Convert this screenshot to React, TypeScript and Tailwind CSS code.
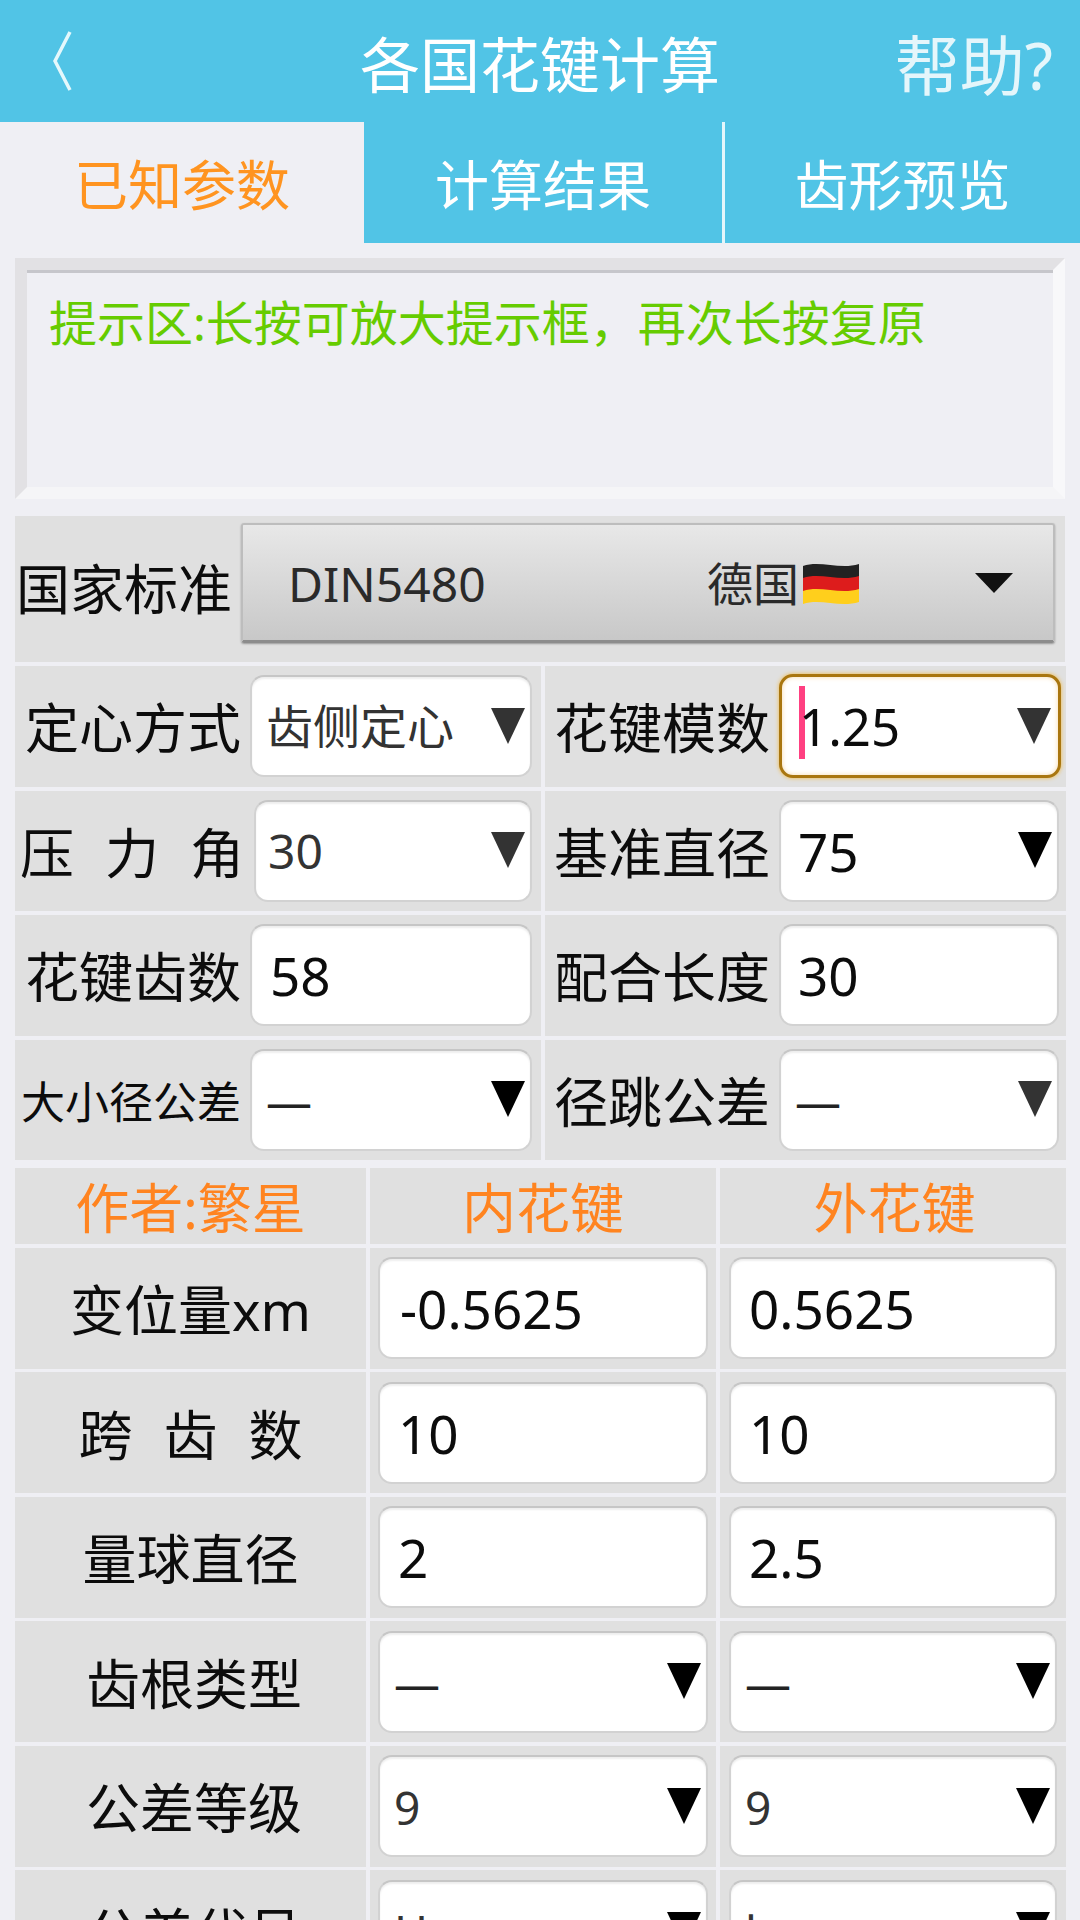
import React from "react";

function Tri({ dark }: { dark?: boolean }) {
  return (
    <svg width="34" height="36" viewBox="0 0 34 36" className="shrink-0">
      <polygon points="0,0 34,0 17,36" fill={dark ? "#333333" : "#000000"} />
    </svg>
  );
}

function Box({
  value,
  select,
  dark,
  textClass = "text-[53px] text-[#0c0c0c]",
  pad = "pl-[18px]",
  width = "",
}: {
  value: string;
  select?: boolean;
  dark?: boolean;
  textClass?: string;
  pad?: string;
  width?: string;
}) {
  return (
    <div
      className={`${width} h-[102px] flex items-center justify-between ${pad} pr-[5px] bg-white rounded-[14px] border-2 border-[#d2d2d2] border-t-[#c6c6c6] shadow-[inset_0_2px_2px_#eeeeee]`}
    >
      <span className={`${textClass} leading-none mt-[1px]`}>{value}</span>
      {select ? (
        <span className="-mt-[1px]">
          <Tri dark={dark} />
        </span>
      ) : null}
    </div>
  );
}

function Field({
  label,
  labelClass = "text-[54px]",
  labelPad = "pr-[9px]",
  ...box
}: {
  label: string;
  labelClass?: string;
  labelPad?: string;
  value: string;
  select?: boolean;
  dark?: boolean;
  textClass?: string;
  pad?: string;
  width: string;
}) {
  return (
    <div className="flex-1 flex items-center justify-end">
      <div className={`whitespace-nowrap leading-none text-[#0c0c0c] mt-[4px] ${labelClass} ${labelPad}`}>{label}</div>
      <Box {...box} />
    </div>
  );
}

function UpperRow({ left, right }: { left: React.ReactNode; right: React.ReactNode }) {
  return (
    <div className="h-[120.5px] grid grid-cols-[526px_521px] gap-x-[4px]">
      <div className="bg-[#e0e0e0] flex items-center pr-[9px]">{left}</div>
      <div className="bg-[#e0e0e0] flex items-center pr-[7px]">{right}</div>
    </div>
  );
}

function LowerRow({
  label,
  labelClass = "",
  a,
  b,
}: {
  label: string;
  labelClass?: string;
  a: { value: string; select?: boolean; textClass?: string; pad?: string };
  b: { value: string; select?: boolean; textClass?: string; pad?: string };
}) {
  return (
    <div className="h-[121px] grid grid-cols-[351px_346px_346px] gap-x-[4px]">
      <div className={`bg-[#e0e0e0] flex items-center justify-center text-[54px] leading-none text-[#0c0c0c] whitespace-nowrap pt-[4px] ${labelClass}`}>
        {label}
      </div>
      <div className="bg-[#e0e0e0] flex items-center pl-[8px] pr-[8px]">
        <Box {...a} width="w-full" />
      </div>
      <div className="bg-[#e0e0e0] flex items-center pl-[9px] pr-[9px]">
        <Box {...b} width="w-full" />
      </div>
    </div>
  );
}

export default function App() {
  const dash = { textClass: "text-[46px] text-[#222]", pad: "pl-[14px]" };
  const nine = { textClass: "text-[46px] text-[#333]", pad: "pl-[14px]" };
  return (
    <div className="w-[1080px] h-[1920px] overflow-hidden bg-[#efeff4] font-['Noto_Sans','Noto_Sans_CJK_SC',sans-serif]">
      <header className="h-[122px] bg-[#51c4e6] grid grid-cols-[1fr_auto_1fr] items-center">
        <div className="pl-[52px]">
          <svg width="20" height="60" viewBox="0 0 20 60">
            <path d="M18 1 L3 30 L18 59" fill="none" stroke="#e4f8fc" strokeWidth="3.5" />
          </svg>
        </div>
        <div className="text-[60px] leading-none text-white pt-[8px]">各国花键计算</div>
        <div className="text-[65px] leading-none text-[#e4f6fb] text-right pr-[27px] pt-[8px] whitespace-nowrap">帮助?</div>
      </header>

      <nav className="h-[121px] flex text-[54px] leading-none">
        <div className="w-[364px] flex items-center justify-center text-[#ff9420] pt-[5px]">已知参数</div>
        <div className="w-[358px] bg-[#51c4e6] flex items-center justify-center text-white pt-[5px]">计算结果</div>
        <div className="w-[3px] bg-[#e4f6fb]" />
        <div className="flex-1 bg-[#51c4e6] flex items-center justify-center text-white pt-[5px]">齿形预览</div>
      </nav>

      <main className="px-[15px] pt-[15px]">
        <div className="h-[241px] w-[1050px] border-[12px] border-t-[#e2e1e4] border-l-[#e2e1e4] border-b-[#f5f5f7] border-r-[#f8f8fa]">
          <div className="h-full border-t-[3px] border-[#c6c6cb] pl-[22px] pt-[20px] text-[48px] leading-[60px] text-[#66cc00] whitespace-nowrap">
            {"提示区:长按可放大提示框\uFF0C再次长按复原"}
          </div>
        </div>

        <div className="mt-[17px] h-[146px] bg-[#e0e0e0] flex items-center pr-[10px]">
          <div className="w-[226px] text-right pr-[9px] text-[54px] leading-none text-[#0c0c0c] whitespace-nowrap">国家标准</div>
          <div className="flex-1 h-[120px] -mt-[12px] flex items-center rounded-[3px] border-2 border-[#bdbdbd] border-b-[3px] border-b-[#8c8c8c] bg-gradient-to-b from-[#e8e8e8] to-[#c8c8c8] shadow-[0_1px_2px_#999]">
            <span className="pl-[45px] text-[48px] leading-none text-[#2a2a2a] w-[464px] mt-[3px]">DIN5480</span>
            <span className="text-[46px] leading-none text-[#2a2a2a] mt-[1px]">德国</span>
            <svg width="58" height="44" viewBox="0 0 58 44" className="shrink-0 ml-[3px]">
              <path d="M1 5 C18 -1 38 9 57 3 L57 16 C38 22 18 12 1 18 Z" fill="#222222" />
              <path d="M1 17 C18 11 38 21 57 15 L57 29 C38 35 18 25 1 31 Z" fill="#dd1c1c" />
              <path d="M1 30 C18 24 38 34 57 28 L57 41 C38 47 18 37 1 43 Z" fill="#ffcf1c" />
            </svg>
            <svg width="38" height="20" viewBox="0 0 38 20" className="ml-[115px] shrink-0">
              <polygon points="0,0 38,0 19,20" fill="#111111" />
            </svg>
          </div>
        </div>

        <div className="mt-[4px] flex flex-col gap-y-[4px]">
          <UpperRow
            left={<Field label="定心方式" value="齿侧定心" select dark textClass="text-[47px] text-[#333]" pad="pl-[14px]" width="w-[282px]" />}
            right={
              <div className="flex-1 flex items-center justify-end">
                <div className="whitespace-nowrap leading-none text-[#0c0c0c] text-[54px] mt-[4px] pr-[9px]">花键模数</div>
                <div className="w-[282px] h-[104px] flex items-center justify-between pl-[17px] pr-[7px] bg-white rounded-[14px] border-[3px] border-[#a9760f] shadow-[0_0_4px_#f0b840,inset_0_0_5px_#f7d9a8] -mr-[2px]">
                  <span className="flex items-center text-[51px] leading-none text-[#0c0c0c] mt-[1px]">
                    <span className="w-[6px] h-[73px] bg-[#ff4081] -mr-[6px] -mt-[8px]" />
                    1.25
                  </span>
                  <span className="-mt-[1px]">
                    <Tri dark />
                  </span>
                </div>
              </div>
            }
          />
          <UpperRow
            left={<Field label="压 力 角" labelClass="text-[54px] [word-spacing:17px]" labelPad="pr-[10px]" value="30" select dark textClass="text-[48px] text-[#333]" pad="pl-[12px]" width="w-[278px]" />}
            right={<Field label="基准直径" value="75" select pad="pl-[17px]" width="w-[280px]" />}
          />
          <UpperRow
            left={<Field label="花键齿数" value="58" pad="pl-[18px]" width="w-[282px]" />}
            right={<Field label="配合长度" value="30" pad="pl-[17px]" width="w-[280px]" />}
          />
          <UpperRow
            left={<Field label="大小径公差" labelClass="text-[44px]" labelPad="pr-[9px]" value="—" select {...dash} width="w-[282px]" />}
            right={<Field label="径跳公差" value="—" select dark {...dash} width="w-[280px]" />}
          />
        </div>

        <div className="mt-[8px] h-[76px] grid grid-cols-[351px_346px_346px] gap-x-[4px] text-[54px] leading-none text-[#ff8420]">
          <div className="bg-[#e0e0e0] flex items-center justify-center pt-[4px]">作者:繁星</div>
          <div className="bg-[#e0e0e0] flex items-center justify-center pt-[4px]">内花键</div>
          <div className="bg-[#e0e0e0] flex items-center justify-center pt-[4px] pl-[3px]">外花键</div>
        </div>

        <div className="mt-[3.5px] flex flex-col gap-y-[3.5px]">
          <LowerRow label="变位量xm" a={{ value: "-0.5625", pad: "pl-[20px]" }} b={{ value: "0.5625" }} />
          <LowerRow label="跨 齿 数" labelClass="[word-spacing:17px]" a={{ value: "10" }} b={{ value: "10" }} />
          <LowerRow label="量球直径" a={{ value: "2" }} b={{ value: "2.5" }} />
          <LowerRow label="齿根类型" labelClass="pl-[7px]" a={{ value: "—", select: true, ...dash }} b={{ value: "—", select: true, ...dash }} />
          <LowerRow label="公差等级" labelClass="pl-[7px]" a={{ value: "9", select: true, ...nine }} b={{ value: "9", select: true, ...nine }} />
          <LowerRow label="公差代号" labelClass="pl-[7px]" a={{ value: "H", select: true, ...nine }} b={{ value: "h", select: true, ...nine }} />
        </div>
      </main>
    </div>
  );
}
